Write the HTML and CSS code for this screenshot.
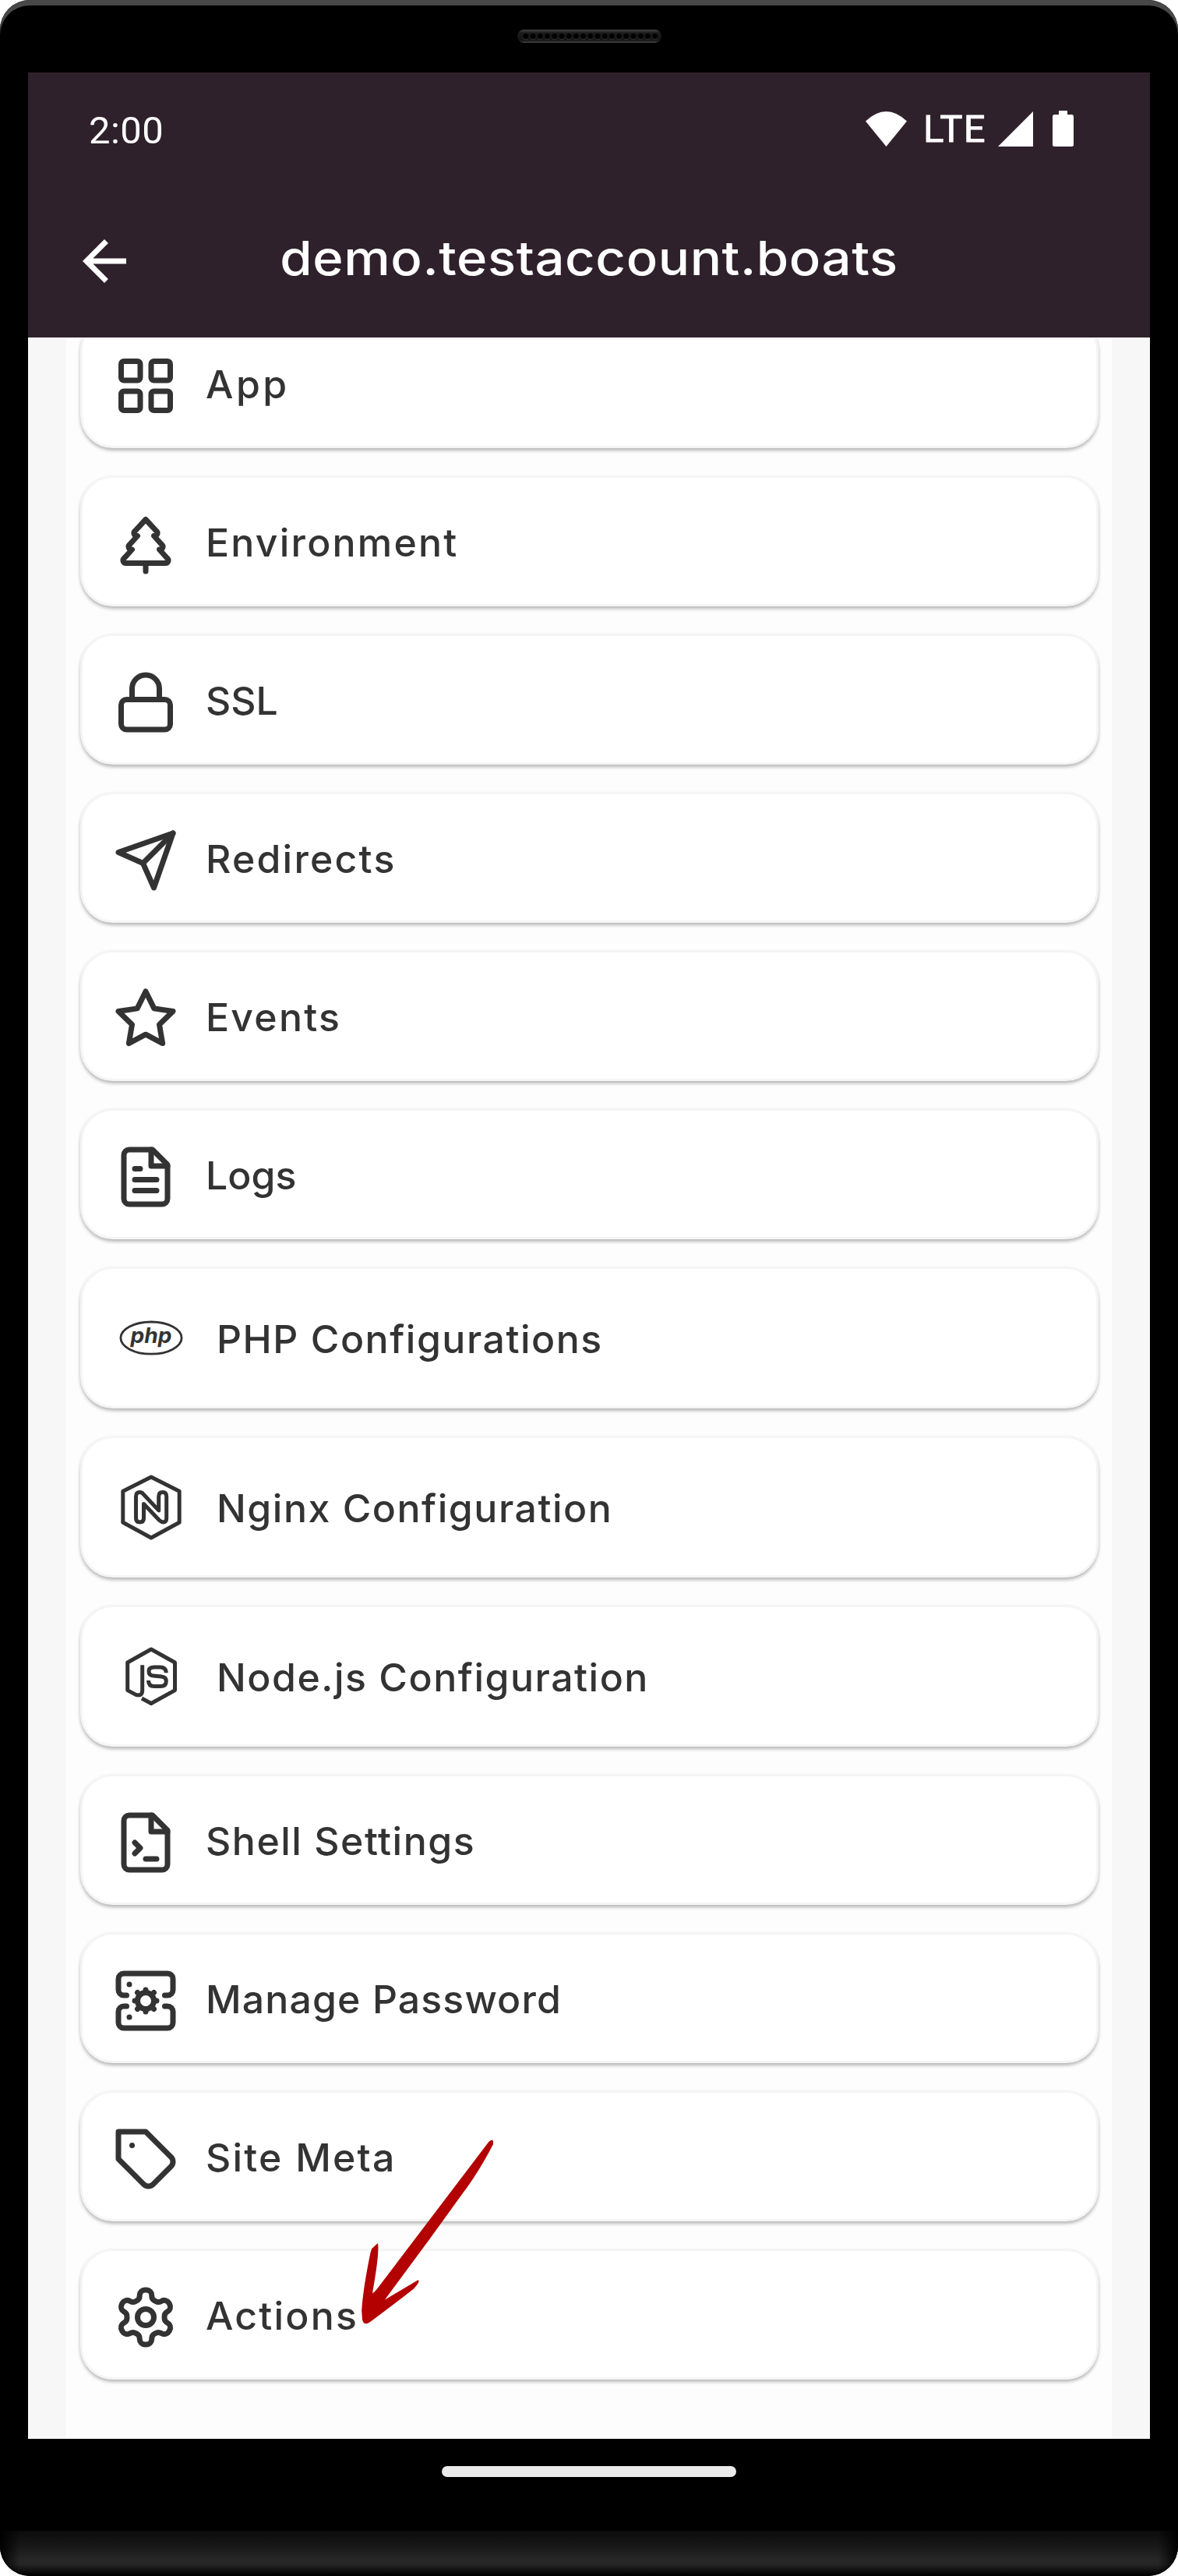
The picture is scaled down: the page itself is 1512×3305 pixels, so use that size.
FILE: index.html
```html
<!DOCTYPE html>
<html lang="en">
<head>
<meta charset="utf-8">
<title>demo.testaccount.boats</title>
<link rel="stylesheet" href="styles.css">
</head>
<body>
<div class="device">
  <div class="bezel-top">
    <svg class="speaker" viewBox="0 0 185 17" aria-hidden="true">
      <defs>
        <linearGradient id="grille" x1="0" y1="0" x2="0" y2="1">
          <stop offset="0" stop-color="#444"/><stop offset=".25" stop-color="#1c1c1c"/><stop offset=".8" stop-color="#141414"/><stop offset="1" stop-color="#444"/>
        </linearGradient>
        <pattern id="holes" x="6.4" y="3.8" width="9.2" height="12" patternUnits="userSpaceOnUse">
          <circle cx="4.6" cy="5.6" r="3.6" fill="#484848"/><circle cx="4.6" cy="4.8" r="3.6" fill="#000"/>
        </pattern>
      </defs>
      <rect width="185" height="17" rx="8.5" fill="url(#grille)"/>
      <rect x="6.4" y="3.8" width="174.8" height="10.5" fill="url(#holes)"/>
    </svg>
  </div>

  <div class="screen">
    <header class="header">
      <div class="status">
        <span class="time">2:00</span>
        <div class="indicators">
          <svg class="wifi" viewBox="0 0 53 45"><path d="M0 12.5Q26.500-12.500 53 12.500L26.500 45Z"/></svg>
          <span class="network">LTE</span>
          <svg class="signal" viewBox="0 0 45 45"><path d="M0 45L45 0V45Z"/></svg>
          <svg class="battery" viewBox="0 0 27 46"><path d="M8 0H19V5H24.500Q27 5 27 7.500V43.500Q27 46 24.500 46H2.500Q0 46 0 43.500V7.500Q0 5 2.500 5H8Z"/></svg>
        </div>
      </div>
      <div class="appbar">
        <svg class="back" viewBox="0 0 24 24"><path d="M20 11H7.830l5.590-5.590L12 4l-8 8 8 8 1.410-1.410L7.830 13H20v-2z"/></svg>
        <h1 class="title">demo.testaccount.boats</h1>
      </div>
    </header>

    <main class="panel">
      <div class="card"><svg class="icon" viewBox="0 0 24 24"><rect x="3" y="3" width="7" height="7" rx="1"/><rect x="14" y="3" width="7" height="7" rx="1"/><rect x="14" y="14" width="7" height="7" rx="1"/><rect x="3" y="14" width="7" height="7" rx="1"/></svg><span class="label track-wide">App</span></div>
      <div class="card"><svg class="icon" viewBox="0 0 24 24"><path d="m17 14 3 3.300a1 1 0 0 1-.7 1.700H4.700a1 1 0 0 1-.7-1.700L7 14h-.3a1 1 0 0 1-.7-1.700L9 9h-.2A1 1 0 0 1 8 7.300L12 3l4 4.300a1 1 0 0 1-.8 1.700H15l3 3.300a1 1 0 0 1-.7 1.700H17Z"/><path d="M12 22v-3"/></svg><span class="label">Environment</span></div>
      <div class="card"><svg class="icon" viewBox="0 0 24 24"><rect x="3" y="11" width="18" height="11" rx="2"/><path d="M7 11V7a5 5 0 0 1 10 0v4"/></svg><span class="label track-none">SSL</span></div>
      <div class="card"><svg class="icon" viewBox="0 0 24 24"><path d="m22 2-7 20-4-9-9-4Z"/><path d="M22 2 11 13"/></svg><span class="label">Redirects</span></div>
      <div class="card"><svg class="icon" viewBox="0 0 24 24"><polygon points="12 2 15.09 8.26 22 9.27 17 14.14 18.18 21.02 12 17.77 5.82 21.02 7 14.14 2 9.27 8.91 8.26 12 2"/></svg><span class="label">Events</span></div>
      <div class="card"><svg class="icon" viewBox="0 0 24 24"><path d="M14.500 2H6a2 2 0 0 0-2 2v16a2 2 0 0 0 2 2h12a2 2 0 0 0 2-2V7.500L14.500 2z"/><path d="M14 2v6h6M16 13H8M16 17H8M10 9H8"/></svg><span class="label track-none">Logs</span></div>
      <div class="card card-brand"><svg class="icon brand" viewBox="0 0 98 98"><ellipse class="thin" cx="49" cy="49.600" rx="39.100" ry="20.600"/><text class="mark" x="22.500" y="55.600" textLength="53" lengthAdjust="spacingAndGlyphs">php</text></svg><span class="label track-tight">PHP Configurations</span></div>
      <div class="card card-brand"><svg class="icon brand" viewBox="0 0 98 98"><path d="M49 11L85.200 29.300V69.300L49 89L12.800 69.300V29.300Z"/><path d="M29.500 36V64Q29.500 68.900 34.500 68.900Q39.500 68.900 39.500 64V45.600L59.500 66.500Q62 68.900 65 68.900Q68.700 68.500 68.700 64V36Q68.700 30.600 63.700 30.600Q58.700 30.600 58.700 36V53.900L39 33Q37 30.600 34.500 30.600Q29.500 30.600 29.500 36Z"/></svg><span class="label track-tight">Nginx Configuration</span></div>
      <div class="card card-brand"><svg class="icon brand" viewBox="0 0 98 98"><path class="butt" d="M37.700 35.300V68Q37.700 75.500 29.500 73.400L18.700 67.600V32L49 15L79.500 32V67.600L49 84.500L37 78"/><path class="butt" d="M68.300 45.300Q68.300 38 60 38H53Q46 38 46 43.300Q46 48.700 51.700 49L62.300 50Q68.300 50.700 68.300 56Q68.300 62.600 61 62.600H53Q45.500 62.600 45.500 55"/></svg><span class="label track-tight">Node.js Configuration</span></div>
      <div class="card"><svg class="icon" viewBox="0 0 24 24"><path d="M14.500 2H6a2 2 0 0 0-2 2v16a2 2 0 0 0 2 2h12a2 2 0 0 0 2-2V7.500L14.500 2z"/><path d="M14 2v6h6M8 16l2-2-2-2M12 18h4"/></svg><span class="label track-tight">Shell Settings</span></div>
      <div class="card"><svg class="icon" viewBox="0 0 24 24"><path d="M5 10H4a2 2 0 0 1-2-2V4a2 2 0 0 1 2-2h16a2 2 0 0 1 2 2v4a2 2 0 0 1-2 2h-1M5 14H4a2 2 0 0 0-2 2v4a2 2 0 0 0 2 2h16a2 2 0 0 0 2-2v-4a2 2 0 0 0-2-2h-1M6 6h.01M6 18h.01"/><circle cx="12" cy="12" r="3"/><path d="M12 8v1M12 15v1M16 12h-1M9 12H8M15 9l-.88.88M9.880 14.120 9 15M15 15l-.88-.88M9.880 9.880 9 9"/></svg><span class="label track-tighter">Manage Password</span></div>
      <div class="card"><svg class="icon" viewBox="0 0 24 24"><path d="M12 2H2v10l9.290 9.290c.94.94 2.480.94 3.420 0l6.580-6.580c.94-.94.94-2.480 0-3.420L12 2Z"/><path d="M7 7h.01"/></svg><span class="label">Site Meta</span></div>
      <div class="card"><svg class="icon" viewBox="0 0 24 24"><path d="M12.220 2h-.44a2 2 0 0 0-2 2v.18a2 2 0 0 1-1 1.730l-.43.25a2 2 0 0 1-2 0l-.15-.08a2 2 0 0 0-2.730.73l-.22.38a2 2 0 0 0 .73 2.730l.15.1a2 2 0 0 1 1 1.720v.51a2 2 0 0 1-1 1.740l-.15.09a2 2 0 0 0-.73 2.730l.22.38a2 2 0 0 0 2.730.73l.15-.08a2 2 0 0 1 2 0l.43.25a2 2 0 0 1 1 1.730V20a2 2 0 0 0 2 2h.44a2 2 0 0 0 2-2v-.18a2 2 0 0 1 1-1.730l.43-.25a2 2 0 0 1 2 0l.15.08a2 2 0 0 0 2.730-.73l.22-.39a2 2 0 0 0-.73-2.730l-.15-.08a2 2 0 0 1-1-1.740v-.5a2 2 0 0 1 1-1.740l.15-.09a2 2 0 0 0 .73-2.730l-.22-.38a2 2 0 0 0-2.730-.73l-.15.08a2 2 0 0 1-2 0l-.43-.25a2 2 0 0 1-1-1.730V4a2 2 0 0 0-2-2z"/><circle cx="12" cy="12" r="3"/></svg><span class="label">Actions</span></div>
    </main>
  </div>

  <div class="bezel-bottom"><div class="home"></div><div class="chin"></div></div>

  <svg class="pointer" viewBox="0 0 170 236"><path d="M163.300 2Q170-4 168.900 5.300Q150 42 127.700 71L86.500 127.900L30 204.400L72.600 179.300Q76 181 67 190.400Q50 204 11.500 232.800Q3 239 1 230L.2 218.400Q2 190 11.500 144.300L13.200 139L21 132Q23 144 15.800 185.500L14 196Q16 196 22 188Z"/></svg>
</div>
</body>
</html>
```

FILE: styles.css
```css
* {
  box-sizing: border-box;
}

body {
  margin: 0;
  background: #fff;
  font-family: Inter, "Liberation Sans", sans-serif;
}

.device {
  position: relative;
  display: flex;
  flex-direction: column;
  width: 1512px;
  height: 3305px;
  padding: 0 36px;
  overflow: hidden;
  border-radius: 38px;
  background: #000;
  box-shadow: inset 0 7px 0 #484848;
}

.bezel-top {
  display: flex;
  justify-content: center;
  height: 93px;
  padding-top: 38px;
}

.speaker {
  width: 185px;
  height: 17px;
}

.screen {
  display: flex;
  flex-direction: column;
  height: 3036px;
  overflow: hidden;
  background: #f7f7f7;
}

.header {
  position: relative;
  z-index: 1;
  flex: none;
  height: 340px;
  background: #2f212b;
  color: #fff;
}

.header svg {
  fill: #fff;
}

.status {
  display: flex;
  justify-content: space-between;
  align-items: flex-start;
  height: 144px;
  padding: 49px 98px 0 78px;
  font: 49px/49px Roboto, sans-serif;
}

.time {
  margin-top: 1px;
  letter-spacing: .4px;
}

.indicators {
  display: flex;
}

.wifi {
  width: 53px;
  height: 45px;
  margin: 1px 21px 0 0;
}

.network {
  width: 96px;
  margin-top: -1px;
  letter-spacing: 1.4px;
  -webkit-text-stroke: .8px #fff;
}

.signal {
  width: 45px;
  height: 45px;
  margin: 1px 25px 0 0;
}

.battery {
  width: 27px;
  height: 46px;
}

.appbar {
  display: flex;
  align-items: center;
  height: 196px;
  padding: 0 56px;
}

.back {
  width: 84px;
  height: 84px;
}

.title {
  flex: 1;
  margin: -8px 84px 0 0;
  font-size: 61px;
  font-weight: 500;
  line-height: 72px;
  letter-spacing: .5px;
  text-align: center;
  transform: scaleX(1.1);
}

.panel {
  display: flex;
  flex-direction: column;
  gap: 35px;
  flex: 1;
  margin: -26px 49px 0;
  padding: 0 17.5px;
  background: #fdfdfd;
}

.card {
  display: flex;
  align-items: center;
  gap: 35px;
  flex: none;
  height: 168px;
  padding: 0 39.5px;
  border: 3.5px solid #f5f5f5;
  border-radius: 42px;
  background: #fff;
  box-shadow: 0 3px 4px rgba(0, 0, 0, .28);
}

.card-brand {
  height: 182px;
}

.icon {
  flex: none;
  width: 84px;
  height: 84px;
  margin-top: 8px;
  fill: none;
  stroke: #333;
  stroke-width: 2;
  stroke-linecap: round;
  stroke-linejoin: round;
}

.brand {
  width: 98px;
  height: 98px;
  margin-top: 0;
  stroke-width: 5;
}

.butt {
  stroke-linecap: butt;
}

.thin {
  stroke-width: 2.8;
}

.mark {
  fill: #333;
  stroke: none;
  font: italic 700 27px Inter, sans-serif;
}

.label {
  margin-top: 3px;
  color: #333;
  font-size: 50px;
  font-weight: 500;
  line-height: 60px;
  letter-spacing: 2.2px;
}

.track-wide {
  letter-spacing: 3.5px;
}

.track-tight {
  letter-spacing: 1.5px;
}

.track-tighter {
  letter-spacing: 1.1px;
}

.track-none {
  letter-spacing: 0;
}

.bezel-bottom {
  display: flex;
  flex-direction: column;
  align-items: center;
  justify-content: space-between;
  flex: 1;
  margin: 0 -36px;
  padding-top: 35px;
}

.home {
  width: 378px;
  height: 14px;
  border-radius: 7px;
  background: #ebebeb;
}

.chin {
  width: 100%;
  height: 58px;
  background:
    linear-gradient(90deg, #000, transparent 26px, transparent calc(100% - 26px), #000),
    linear-gradient(#0b0b0b, #171717 32%, #262626 62%, #262626 74%, #000 98%);
}

/* Hand-drawn arrow laid over the list */
.pointer {
  position: absolute;
  left: 464px;
  top: 2746px;
  width: 170px;
  height: 236px;
  fill: #b30000;
  overflow: visible;
}
```
